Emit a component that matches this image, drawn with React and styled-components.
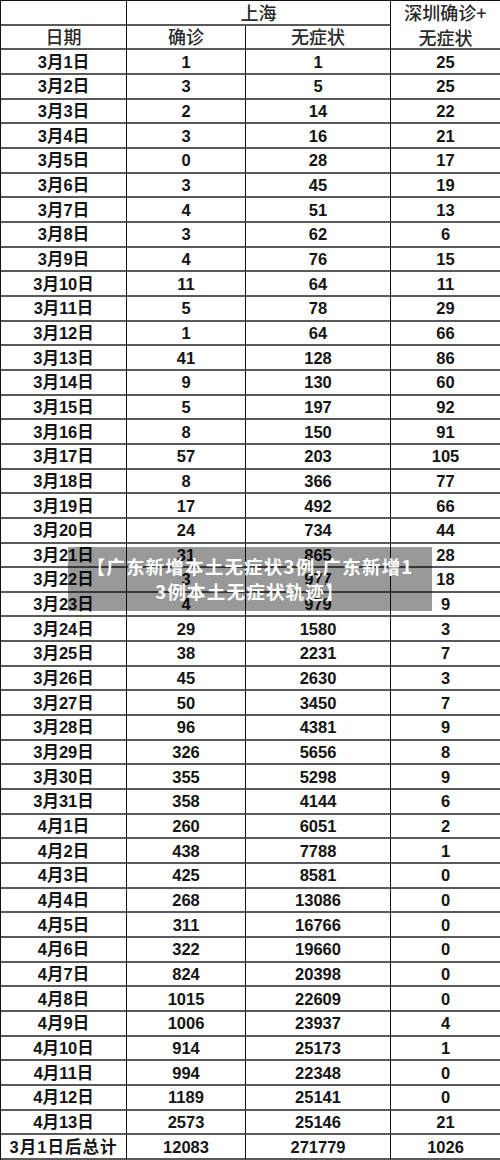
import React from 'react'
import styled, { createGlobalStyle } from 'styled-components'

const GlobalStyle = createGlobalStyle`
  html, body {
    margin: 0;
    padding: 0;
    background: #fff;
  }
  body {
    font-family: "Liberation Sans", "Noto Sans CJK SC", sans-serif;
  }
`

const dates = [
  ...Array.from({ length: 31 }, (_, i) => `3月${i + 1}日`),
  ...Array.from({ length: 13 }, (_, i) => `4月${i + 1}日`),
]

const confirmed = [1, 3, 2, 3, 0, 3, 4, 3, 4, 11, 5, 1, 41, 9, 5, 8, 57, 8, 17, 24, 31, 3, 4, 29, 38, 45, 50, 96, 326, 355, 358, 260, 438, 425, 268, 311, 322, 824, 1015, 1006, 914, 994, 1189, 2573]
const asymptomatic = [1, 5, 14, 16, 28, 45, 51, 62, 76, 64, 78, 64, 128, 130, 197, 150, 203, 366, 492, 734, 865, 977, 979, 1580, 2231, 2630, 3450, 4381, 5656, 5298, 4144, 6051, 7788, 8581, 13086, 16766, 19660, 20398, 22609, 23937, 25173, 22348, 25141, 25146]
const shenzhen = [25, 25, 22, 21, 17, 19, 13, 6, 15, 11, 29, 66, 86, 60, 92, 91, 105, 77, 66, 44, 28, 18, 9, 3, 7, 3, 7, 9, 8, 9, 6, 2, 1, 0, 0, 0, 0, 0, 0, 4, 1, 0, 0, 21]

function App() {
  return (
    <>
      <GlobalStyle />
      <Page>
        <Table>
          <HeadCell />
          <HeadCell $span={2}>上海</HeadCell>
          <HeadCell $rows={2}>
            <span>深圳确诊+</span>
            <span>无症状</span>
          </HeadCell>
          <HeadCell>日期</HeadCell>
          <HeadCell>确诊</HeadCell>
          <HeadCell>无症状</HeadCell>

          {dates.map((d, i) => (
            <React.Fragment key={d}>
              <Cell>{d}</Cell>
              <Cell>{confirmed[i]}</Cell>
              <Cell>{asymptomatic[i]}</Cell>
              <Cell>{shenzhen[i]}</Cell>
            </React.Fragment>
          ))}

          <Cell $tight>3月1日后总计</Cell>
          <Cell>12083</Cell>
          <Cell>271779</Cell>
          <Cell>1026</Cell>
        </Table>

        <Caption>
          【广东新增本土无症状3例,广东新增1
          <br />
          3例本土无症状轨迹】
        </Caption>
      </Page>
    </>
  )
}

export default App

const Page = styled.div`
position: relative;
width: 500px;
height: 1160px;
overflow: hidden;
background: #fff;
`

const Table = styled.div`
display: grid;
grid-template-columns: 126px 119px 145px 110px;
grid-template-rows: repeat(47, minmax(0, 1fr));
height: 1160px;
box-sizing: border-box;
border-left: 1.5px solid #111;
border-top: 1.5px solid #111;
`

const Cell = styled.div`
display: flex;
align-items: center;
justify-content: center;
min-height: 0;
box-sizing: border-box;
border-right: 1.5px solid #111;
border-bottom: 2px solid #5a5a5a;
font-family: "Liberation Sans", "Noto Sans CJK SC", sans-serif;
font-weight: 700;
font-size: 16.5px;
line-height: 18px;
color: #141414;
white-space: nowrap;
letter-spacing: ${p => (p.$tight ? '1px' : '0')};
`

const HeadCell = styled(Cell)`
grid-column: span ${p => p.$span || 1};
grid-row: span ${p => p.$rows || 1};
flex-direction: column;
gap: 6px;
font-family: "Noto Sans CJK SC", sans-serif;
font-weight: 500;
font-size: 18px;
line-height: 19px;
color: #2a2a2a;
text-align: center;
`

const Caption = styled.div`
position: absolute;
left: 68px;
top: 547px;
width: 364px;
height: 64px;
box-sizing: border-box;
padding: 7px 0;
background: rgba(0, 0, 0, 0.4);
color: #fff;
font-family: "Noto Sans CJK SC", sans-serif;
font-weight: 700;
font-size: 18.5px;
line-height: 25px;
letter-spacing: 1.2px;
text-align: center;
white-space: nowrap;
`
